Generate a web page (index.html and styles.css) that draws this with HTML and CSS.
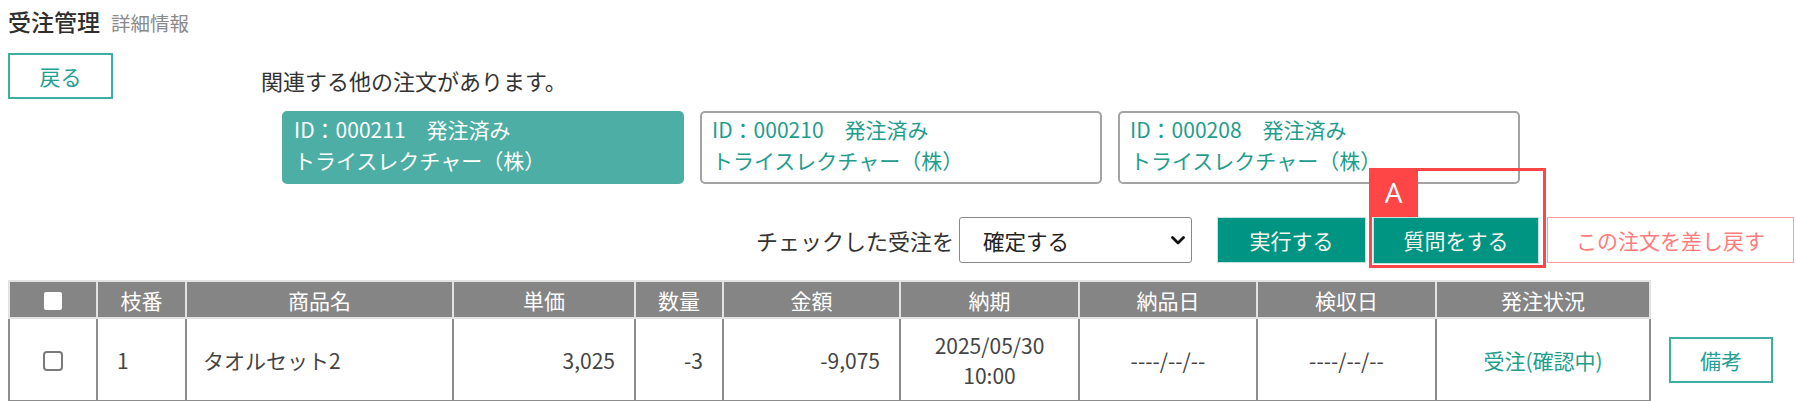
FILE: index.html
```html
<!DOCTYPE html>
<html lang="ja">
<head>
<meta charset="utf-8">
<title>受注管理 詳細情報</title>
<link rel="stylesheet" href="styles.css">
</head>
<body>
<div class="page">
  <div class="title">
    <h1 class="title-main">受注管理</h1>
    <span class="title-sub">詳細情報</span>
  </div>

  <div class="top">
    <button class="btn-outline btn-back">戻る</button>
    <div class="related">
      <p class="related-text">関連する他の注文があります。</p>
      <div class="cards">
        <div class="card card-active">
          <span class="card-line">ID：000211　発注済み</span>
          <span class="card-line">トライスレクチャー（株）</span>
        </div>
        <div class="card">
          <span class="card-line">ID：000210　発注済み</span>
          <span class="card-line">トライスレクチャー（株）</span>
        </div>
        <div class="card">
          <span class="card-line">ID：000208　発注済み</span>
          <span class="card-line">トライスレクチャー（株）</span>
        </div>
      </div>
    </div>
  </div>

  <div class="actions">
    <span class="actions-label">チェックした受注を</span>
    <div class="select">
      <span class="select-value">確定する</span>
      <svg class="select-arrow" width="14" height="9" viewBox="0 0 14 9"><polyline points="1.5,1.5 7,7 12.5,1.5" fill="none" stroke="#111" stroke-width="2.8" stroke-linecap="round" stroke-linejoin="round"/></svg>
    </div>
    <button class="btn btn-primary btn-exec">実行する</button>
    <span class="annot-wrap">
      <button class="btn btn-primary btn-ask">質問をする</button>
      <span class="annot"><span class="annot-label">A</span></span>
    </span>
    <button class="btn btn-return">この注文を差し戻す</button>
  </div>

  <table class="grid">
    <colgroup>
      <col class="c-check">
      <col class="c-no">
      <col class="c-name">
      <col class="c-price">
      <col class="c-qty">
      <col class="c-amount">
      <col class="c-due">
      <col class="c-deliv">
      <col class="c-insp">
      <col class="c-status">
      <col class="c-note">
    </colgroup>
    <thead>
      <tr>
        <th><span class="hcheck"></span></th>
        <th>枝番</th>
        <th>商品名</th>
        <th>単価</th>
        <th>数量</th>
        <th>金額</th>
        <th>納期</th>
        <th>納品日</th>
        <th>検収日</th>
        <th>発注状況</th>
        <th class="th-blank"></th>
      </tr>
    </thead>
    <tbody>
      <tr>
        <td class="center"><span class="rcheck"></span></td>
        <td class="left">1</td>
        <td class="left">タオルセット2</td>
        <td class="right">3,025</td>
        <td class="right">-3</td>
        <td class="right">-9,075</td>
        <td class="center due">2025/05/30<br>10:00</td>
        <td class="center">----/--/--</td>
        <td class="center">----/--/--</td>
        <td class="center status">受注(確認中)</td>
        <td class="td-blank"><button class="btn-outline btn-note">備考</button></td>
      </tr>
    </tbody>
  </table>
</div>
</body>
</html>
```

FILE: styles.css
```css
* {
  box-sizing: border-box;
}

html, body {
  margin: 0;
  padding: 0;
  background: #ffffff;
}

body {
  font-family: "Noto Sans CJK JP", "Noto Sans", sans-serif;
  color: #333333;
  font-size: 21px;
}

.page {
  padding: 6px 2px 0 8px;
}

/* title */
.title {
  display: flex;
  align-items: baseline;
  height: 30px;
  line-height: 30px;
}

.title-main {
  margin: 0;
  font-size: 23px;
  font-weight: 500;
  color: #2e2e2e;
}

.title-sub {
  margin-left: 11px;
  font-size: 19.5px;
  color: #8a8a8a;
}

/* top area */
.top {
  display: flex;
  align-items: flex-start;
  margin-top: 17px;
}

.btn-outline {
  font-family: inherit;
  background: #ffffff;
  border: 2px solid #3fad9f;
  color: #23a092;
  font-size: 21px;
  padding: 0;
  cursor: pointer;
}

.btn-back {
  width: 105px;
  height: 46px;
}

.related {
  margin-left: 148px;
}

.related-text {
  margin: 12px 0 0;
  line-height: 30px;
  font-size: 22px;
  color: #333333;
}

.cards {
  display: flex;
  gap: 16px;
  margin: 16px 0 0 21px;
}

.card {
  width: 402px;
  height: 73px;
  border: 2px solid #a3a3a3;
  border-radius: 5px;
  padding: 1px 10px;
  display: flex;
  flex-direction: column;
  color: #1f9d8d;
  font-size: 21px;
  line-height: 31px;
  background: #ffffff;
}

.card-active {
  background: #4caea4;
  border-color: #4caea4;
  color: #ffffff;
}

/* actions */
.actions {
  display: flex;
  justify-content: flex-end;
  align-items: center;
  margin-top: 33px;
  height: 46px;
}

.actions-label {
  font-size: 22px;
  color: #333333;
  margin-right: 5px;
}

.select {
  width: 233px;
  height: 46px;
  border: 1px solid #8a8a8a;
  border-radius: 3px;
  display: flex;
  align-items: center;
  justify-content: space-between;
  padding: 0 6px 0 23px;
  font-size: 21.5px;
  color: #222222;
  margin-right: 25px;
}

.select-arrow {
  display: block;
}

.btn {
  font-family: inherit;
  height: 46px;
  font-size: 21px;
  padding: 0;
  cursor: pointer;
}

.btn-primary {
  background: #009483;
  border: 1px solid #bfe2db;
  color: #f6f6ee;
}

.btn-exec {
  width: 149px;
  margin-right: 7px;
}

.annot-wrap {
  position: relative;
  display: block;
  margin-right: 8px;
}

.btn-ask {
  display: block;
  width: 166px;
  height: 47px;
}

.annot {
  position: absolute;
  left: -4px;
  top: -49px;
  width: 177px;
  height: 100px;
  border: 3px solid #fe4646;
  pointer-events: none;
}

.annot-label {
  position: absolute;
  left: -3px;
  top: -3px;
  width: 49px;
  height: 49px;
  background: #fe4646;
  color: #ffffff;
  font-family: "Open Sans", "Noto Sans", sans-serif;
  font-size: 28px;
  line-height: 49px;
  text-align: center;
}

.btn-return {
  width: 247px;
  background: #ffffff;
  border: 1.5px solid #ff9d9d;
  color: #ff7c7c;
}

/* table */
.grid {
  margin-top: 17px;
  width: 100%;
  border-collapse: collapse;
  table-layout: fixed;
  font-size: 21px;
}

.c-check { width: 88px; }
.c-no { width: 89px; }
.c-name { width: 267px; }
.c-price { width: 182px; }
.c-qty { width: 88px; }
.c-amount { width: 177px; }
.c-due { width: 179px; }
.c-deliv { width: 178px; }
.c-insp { width: 179px; }
.c-status { width: 214px; }
.c-note { width: auto; }

.grid th {
  height: 37px;
  background: #858585;
  color: #ffffff;
  font-weight: normal;
  border: 2px solid #e2e2e2;
  padding: 0;
  line-height: 30px;
  text-align: center;
}

.grid th.th-blank {
  background: transparent;
  border: none;
}

.grid td {
  height: 83px;
  border: 2px solid #8c8c8c;
  padding: 0 18px;
  color: #444444;
  line-height: 30px;
  vertical-align: middle;
}

.grid td.td-blank {
  border: none;
  padding: 0 0 0 18px;
}

.left { text-align: left; }
.right { text-align: right; }
.center { text-align: center; }

.grid td.right { padding-right: 19px; }
.grid td.left:nth-child(2) { padding-left: 19px; }
.grid td.left:nth-child(3) { padding-left: 16px; }

.grid td.status {
  color: #1f9d8d;
}

.hcheck {
  display: inline-block;
  width: 18px;
  height: 18px;
  background: #ffffff;
  border-radius: 2px;
  vertical-align: middle;
  margin-top: -3px;
}

.rcheck {
  display: inline-block;
  width: 20px;
  height: 20px;
  border: 2px solid #7a7a7a;
  border-radius: 4px;
  background: #ffffff;
  vertical-align: middle;
  margin-top: -4px;
}

.btn-note {
  width: 104px;
  height: 46px;
  display: block;
}
```
